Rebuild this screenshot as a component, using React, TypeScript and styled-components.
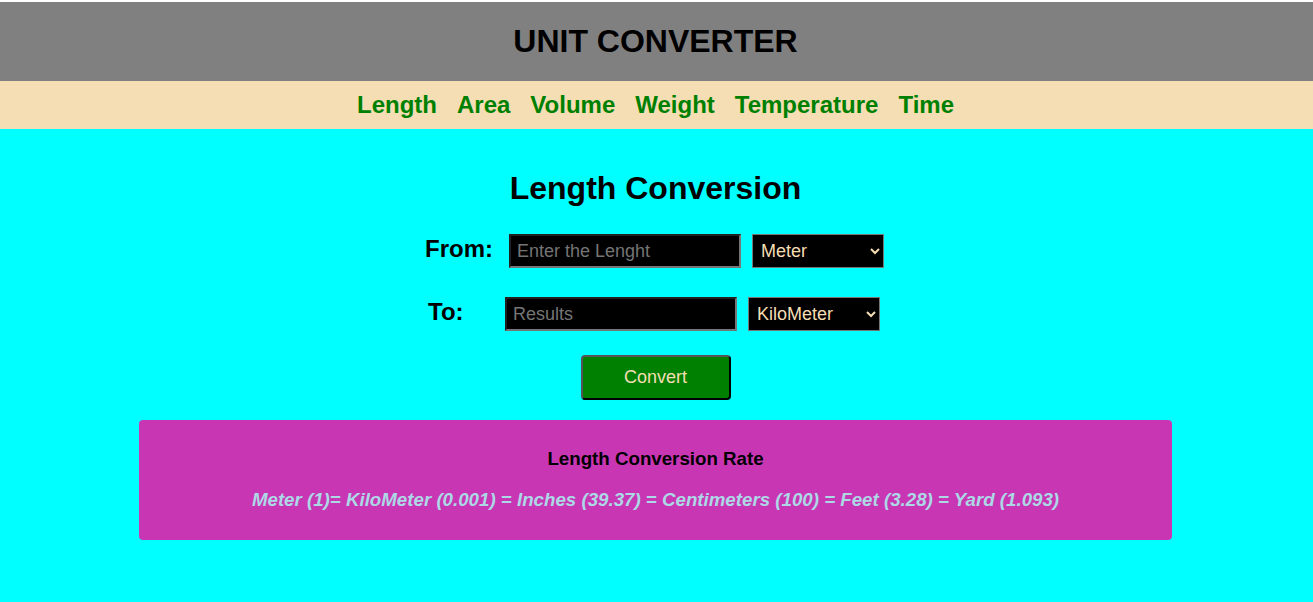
import React from "react";
import styled, { createGlobalStyle } from "styled-components";

const GlobalStyle = createGlobalStyle`
  html, body {
    margin: 0;
    padding: 0;
    background: #ffffff;
  }
  body {
    padding-top: 2px;
    font-family: "Liberation Sans", Arial, sans-serif;
  }
`;

const Page = styled.div`
  display: flex;
  flex-direction: column;
  min-height: 600px;
  background: #00ffff;
`;

const Header = styled.header`
  height: 79px;
  background: #808080;
  display: flex;
  align-items: center;
  justify-content: center;
  padding-right: 2px;
`;

const Title = styled.h1`
  margin: 0;
  font-size: 32px;
  font-weight: 700;
  color: #000;
`;

const Nav = styled.nav`
  height: 48px;
  background: #f5deb3;
  display: flex;
  align-items: center;
  justify-content: center;
  gap: 20px;
  padding-right: 2px;
`;

const NavLink = styled.a`
  font-size: 24px;
  font-weight: 700;
  color: #008000;
  text-decoration: none;
  cursor: pointer;
`;

const Main = styled.main`
  display: flex;
  flex-direction: column;
  align-items: center;
  padding-top: 41px;
  padding-right: 2px;
`;

const Heading = styled.h2`
  margin: 0 0 27px;
  font-size: 32px;
  font-weight: 700;
  color: #000;
`;

const Row = styled.div<{ $gapBelow: number; $shift: number }>`
  display: flex;
  align-items: center;
  margin-bottom: ${(p) => p.$gapBelow}px;
  margin-left: ${(p) => p.$shift}px;
`;

const Label = styled.label<{ $width: number }>`
  width: ${(p) => p.$width}px;
  font-size: 24px;
  font-weight: 700;
  color: #000;
  margin-top: -4px;
`;

const TextInput = styled.input`
  box-sizing: border-box;
  width: 232px;
  height: 34px;
  padding: 0 6px;
  background: #000;
  color: #f5deb3;
  border: 2px inset #767676;
  font-family: "Liberation Sans", Arial, sans-serif;
  font-size: 18px;

  &::placeholder {
    color: #757575;
  }
`;

const Select = styled.select`
  box-sizing: border-box;
  width: 132px;
  height: 34px;
  margin-left: 11px;
  padding: 0 4px;
  background: #000;
  color: #f5deb3;
  border: 1px solid #767676;
  font-family: "Liberation Sans", Arial, sans-serif;
  font-size: 18px;
`;

const ConvertButton = styled.button`
  box-sizing: border-box;
  width: 150px;
  height: 45px;
  background: #008000;
  color: #f5deb3;
  border: 2px outset #555;
  border-right-color: #111;
  border-bottom-color: #111;
  border-radius: 4px;
  font-family: "Liberation Sans", Arial, sans-serif;
  font-size: 18px;
  cursor: pointer;
  margin-bottom: 20px;
`;

const RateBox = styled.section`
  box-sizing: border-box;
  width: 1033px;
  height: 120px;
  background: #c936b4;
  border-radius: 4px;
  display: flex;
  flex-direction: column;
  align-items: center;
  padding-top: 28px;
`;

const RateTitle = styled.h3`
  margin: 0 0 19px;
  font-size: 18.72px;
  font-weight: 700;
  color: #000;
`;

const RateText = styled.p`
  margin: 0;
  font-size: 18.72px;
  font-weight: 700;
  font-style: italic;
  color: #add8e6;
`;

const links = ["Length", "Area", "Volume", "Weight", "Temperature", "Time"];

const units = [
  { value: "meter", label: "Meter" },
  { value: "kilometer", label: "KiloMeter" },
  { value: "inches", label: "Inches" },
  { value: "centimeters", label: "Centimeters" },
  { value: "feet", label: "Feet" },
  { value: "yard", label: "Yard" },
];

const App: React.FC = () => {
  return (
    <>
      <GlobalStyle />
      <Page>
        <Header>
          <Title>UNIT CONVERTER</Title>
        </Header>
        <Nav>
          {links.map((l) => (
            <NavLink key={l}>{l}</NavLink>
          ))}
        </Nav>
        <Main>
          <Heading>Length Conversion</Heading>
          <Row $gapBelow={29} $shift={-2}>
            <Label $width={84}>From:</Label>
            <TextInput placeholder="Enter the Lenght" />
            <Select defaultValue="meter">
              {units.map((u) => (
                <option key={u.value} value={u.value}>
                  {u.label}
                </option>
              ))}
            </Select>
          </Row>
          <Row $gapBelow={24} $shift={-3}>
            <Label $width={77}>To:</Label>
            <TextInput placeholder="Results" readOnly />
            <Select defaultValue="kilometer">
              {units.map((u) => (
                <option key={u.value} value={u.value}>
                  {u.label}
                </option>
              ))}
            </Select>
          </Row>
          <ConvertButton>Convert</ConvertButton>
          <RateBox>
            <RateTitle>Length Conversion Rate</RateTitle>
            <RateText>
              Meter (1)= KiloMeter (0.001) = Inches (39.37) = Centimeters (100) = Feet (3.28) = Yard (1.093)
            </RateText>
          </RateBox>
        </Main>
      </Page>
    </>
  );
};

export default App;
